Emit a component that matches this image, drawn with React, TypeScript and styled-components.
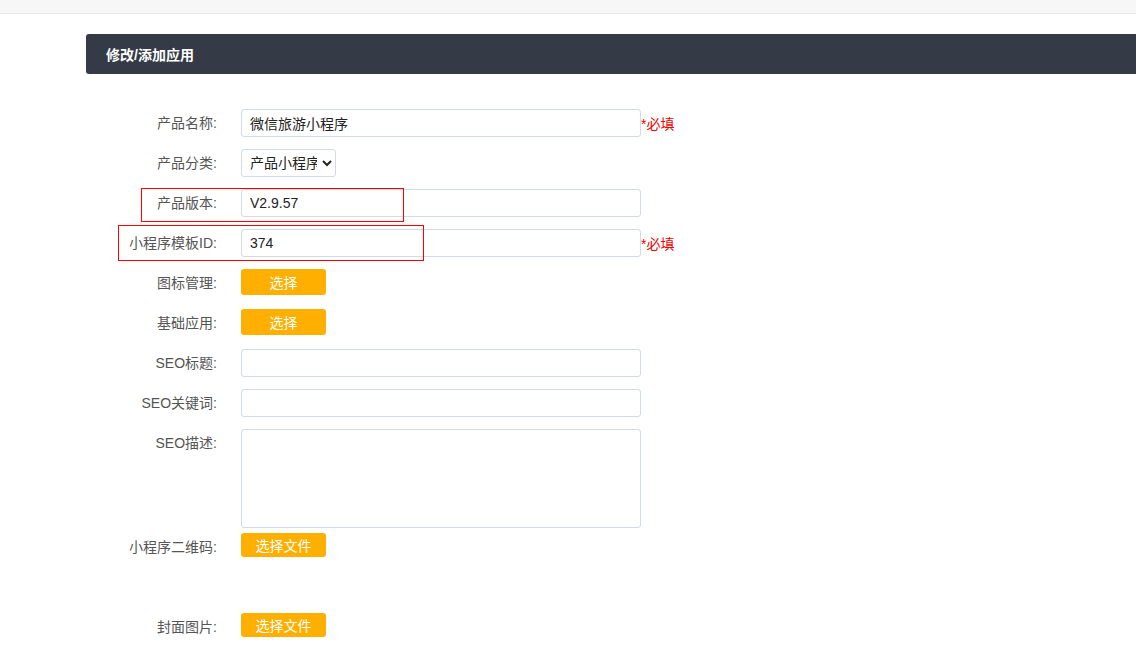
import React from "react";
import styled, { createGlobalStyle } from "styled-components";

const GlobalStyle = createGlobalStyle`
  html, body {
    margin: 0;
    padding: 0;
    background: #ffffff;
    font-family: "Liberation Sans", "Noto Sans CJK SC", sans-serif;
    font-size: 14px;
    color: #555;
  }
  * { box-sizing: border-box; }
`;

/* thin grey bar along the top of the page */
const TopStrip = styled.div`
  height: 14px;
  background: #f7f7f7;
  border-bottom: 1px solid #e8e8e8;
`;

const Main = styled.main`
  padding: 20px 0 0 86px;
`;

const PanelHeader = styled.div`
  height: 40px;
  display: flex;
  align-items: center;
  padding-left: 20px;
  background: #343a46;
  border-radius: 3px 0 0 3px;
  color: #ffffff;
  font-size: 14px;
  font-weight: 700;
`;

const Form = styled.form`
  padding-top: 35px;
`;

const Row = styled.div<{ $after?: number }>`
  position: relative;
  display: grid;
  grid-template-columns: 131px 1fr;
  column-gap: 24px;
  align-items: start;
  margin-bottom: ${(p) => (p.$after ?? 12)}px;
`;

const Label = styled.label`
  text-align: right;
  line-height: 28px;
  font-size: 14px;
  color: #555;
  white-space: nowrap;
`;

const Field = styled.div`
  display: flex;
  align-items: flex-start;
`;

const TextInput = styled.input`
  width: 400px;
  height: 28px;
  padding: 0 8px;
  border: 1px solid #d3dbe6;
  border-radius: 3px;
  font: inherit;
  font-size: 14px;
  color: #222;
  background: #fff;
  outline: none;
`;

const TextArea = styled.textarea`
  width: 400px;
  height: 99px;
  padding: 6px 8px;
  border: 1px solid #d3dbe6;
  border-radius: 3px;
  font: inherit;
  resize: none;
  outline: none;
`;

const Select = styled.select`
  width: 95px;
  height: 28px;
  padding: 0 2px 0 4px;
  border: 1px solid #d3dbe6;
  border-radius: 3px;
  font: inherit;
  font-size: 14px;
  color: #222;
  background: #fff;
`;

const Required = styled.span`
  position: relative;
  top: 1px;
  line-height: 28px;
  font-size: 14px;
  color: #f00000;
`;

const PickButton = styled.button<{ $h?: number }>`
  width: 85px;
  height: ${(p) => p.$h ?? 26}px;
  border: none;
  border-radius: 3px;
  background: #ffaf00;
  color: #ffffff;
  font: inherit;
  font-size: 14px;
  cursor: pointer;
`;

/* red annotation frames drawn over the form */
const Mark = styled.div<{ $top: number; $left: number; $w: number; $h: number }>`
  position: absolute;
  top: ${(p) => p.$top}px;
  left: ${(p) => p.$left}px;
  width: ${(p) => p.$w}px;
  height: ${(p) => p.$h}px;
  border: 1px solid #ff0000;
  pointer-events: none;
`;

export default function App() {
  return (
    <>
      <GlobalStyle />
      <TopStrip />
      <Main>
        <PanelHeader>修改/添加应用</PanelHeader>
        <Form>
          <Row>
            <Label>产品名称:</Label>
            <Field>
              <TextInput defaultValue="微信旅游小程序" />
              <Required>*必填</Required>
            </Field>
          </Row>
          <Row>
            <Label>产品分类:</Label>
            <Field>
              <Select defaultValue="mini">
                <option value="mini">产品小程序</option>
              </Select>
            </Field>
          </Row>
          <Row>
            <Mark $top={-1} $left={55} $w={263} $h={34} />
            <Label>产品版本:</Label>
            <Field>
              <TextInput defaultValue="V2.9.57" />
            </Field>
          </Row>
          <Row>
            <Mark $top={-4} $left={32} $w={306} $h={36} />
            <Label>小程序模板ID:</Label>
            <Field>
              <TextInput defaultValue="374" />
              <Required>*必填</Required>
            </Field>
          </Row>
          <Row>
            <Label>图标管理:</Label>
            <Field>
              <PickButton type="button">选择</PickButton>
            </Field>
          </Row>
          <Row>
            <Label>基础应用:</Label>
            <Field>
              <PickButton type="button">选择</PickButton>
            </Field>
          </Row>
          <Row>
            <Label>SEO标题:</Label>
            <Field>
              <TextInput />
            </Field>
          </Row>
          <Row>
            <Label>SEO关键词:</Label>
            <Field>
              <TextInput />
            </Field>
          </Row>
          <Row $after={5}>
            <Label>SEO描述:</Label>
            <Field>
              <TextArea />
            </Field>
          </Row>
          <Row $after={52}>
            <Label>小程序二维码:</Label>
            <Field>
              <PickButton type="button" $h={24}>选择文件</PickButton>
            </Field>
          </Row>
          <Row>
            <Label>封面图片:</Label>
            <Field>
              <PickButton type="button" $h={24}>选择文件</PickButton>
            </Field>
          </Row>
        </Form>
      </Main>
    </>
  );
}
